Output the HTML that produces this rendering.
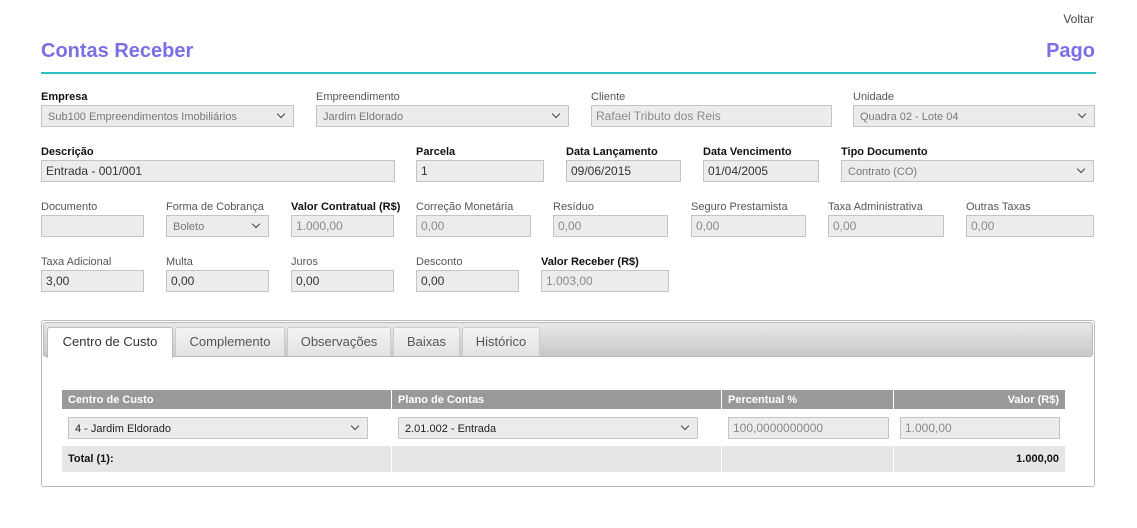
<!DOCTYPE html>
<html><head><meta charset="utf-8"><style>
*{box-sizing:border-box;margin:0;padding:0}
body{width:1137px;height:528px;background:#fff;font-family:"Liberation Sans",Arial,sans-serif;position:relative;overflow:hidden}
.a{position:absolute}
.l{position:absolute;font-size:11px;color:#555;white-space:nowrap;margin-top:1px}
.l.b{font-weight:bold;color:#111}
.i{position:absolute;height:22px;background:#ececec;border:1px solid #c4c4c4;font-size:12px;color:#333;padding:3px 4px;line-height:14px;white-space:nowrap;overflow:hidden}
.i.d{color:#8a8a8a}
.s{font-size:11px;padding:4px 6px;color:#777}
.s:after{content:"";position:absolute;right:9px;top:5px;width:5px;height:5px;border-right:1.6px solid #444;border-bottom:1.6px solid #444;transform:rotate(45deg)}
.tab{position:absolute;top:327px;height:29px;background:linear-gradient(#f4f4f4,#e2e2e2);border:1px solid #ccc;border-bottom:none;border-radius:3px 3px 0 0;font-size:13px;color:#555;text-align:center;line-height:28px}
.th{position:absolute;top:390px;height:19px;background:#999;color:#fff;font-size:11px;font-weight:bold;line-height:20px;padding:0 6px}
.tt{position:absolute;top:446px;height:26px;background:#e6e6e6;font-size:11px;font-weight:bold;line-height:26px;padding:0 6px;color:#111}
</style></head><body>
<div class="a" style="right:43px;top:12px;font-size:12px;color:#444">Voltar</div>
<div class="a" style="left:41px;top:40px;font-size:20px;font-weight:bold;color:#7b6fe6">Contas Receber</div>
<div class="a" style="right:42px;top:40px;font-size:20px;font-weight:bold;color:#7b6fe6">Pago</div>
<div class="a" style="left:41px;top:72px;width:1055px;height:2px;background:#2bc3c0"></div>

<div class="l b" style="left:41px;top:90px">Empresa</div>
<div class="i s" style="left:41px;top:105px;width:253px">Sub100 Empreendimentos Imobiliários</div>
<div class="l" style="left:316px;top:90px">Empreendimento</div>
<div class="i s" style="left:316px;top:105px;width:253px">Jardim Eldorado</div>
<div class="l" style="left:591px;top:90px">Cliente</div>
<div class="i d" style="left:591px;top:105px;width:241px">Rafael Tributo dos Reis</div>
<div class="l" style="left:853px;top:90px">Unidade</div>
<div class="i s" style="left:853px;top:105px;width:242px">Quadra 02 - Lote 04</div>

<div class="l b" style="left:41px;top:145px">Descrição</div>
<div class="i" style="left:41px;top:160px;width:354px">Entrada - 001/001</div>
<div class="l b" style="left:416px;top:145px">Parcela</div>
<div class="i" style="left:416px;top:160px;width:128px">1</div>
<div class="l b" style="left:566px;top:145px">Data Lançamento</div>
<div class="i" style="left:566px;top:160px;width:115px">09/06/2015</div>
<div class="l b" style="left:703px;top:145px">Data Vencimento</div>
<div class="i" style="left:703px;top:160px;width:116px">01/04/2005</div>
<div class="l b" style="left:841px;top:145px">Tipo Documento</div>
<div class="i s" style="left:841px;top:160px;width:253px">Contrato (CO)</div>

<div class="l" style="left:41px;top:200px">Documento</div>
<div class="i" style="left:41px;top:215px;width:103px"></div>
<div class="l" style="left:166px;top:200px">Forma de Cobrança</div>
<div class="i s" style="left:166px;top:215px;width:103px">Boleto</div>
<div class="l b" style="left:291px;top:200px">Valor Contratual (R$)</div>
<div class="i d" style="left:291px;top:215px;width:103px">1.000,00</div>
<div class="l" style="left:416px;top:200px">Correção Monetária</div>
<div class="i d" style="left:416px;top:215px;width:115px">0,00</div>
<div class="l" style="left:553px;top:200px">Resíduo</div>
<div class="i d" style="left:553px;top:215px;width:115px">0,00</div>
<div class="l" style="left:691px;top:200px">Seguro Prestamista</div>
<div class="i d" style="left:691px;top:215px;width:115px">0,00</div>
<div class="l" style="left:828px;top:200px">Taxa Administrativa</div>
<div class="i d" style="left:828px;top:215px;width:116px">0,00</div>
<div class="l" style="left:966px;top:200px">Outras Taxas</div>
<div class="i d" style="left:966px;top:215px;width:128px">0,00</div>

<div class="l" style="left:41px;top:255px">Taxa Adicional</div>
<div class="i" style="left:41px;top:270px;width:103px">3,00</div>
<div class="l" style="left:166px;top:255px">Multa</div>
<div class="i" style="left:166px;top:270px;width:103px">0,00</div>
<div class="l" style="left:291px;top:255px">Juros</div>
<div class="i" style="left:291px;top:270px;width:103px">0,00</div>
<div class="l" style="left:416px;top:255px">Desconto</div>
<div class="i" style="left:416px;top:270px;width:103px">0,00</div>
<div class="l b" style="left:541px;top:255px">Valor Receber (R$)</div>
<div class="i d" style="left:541px;top:270px;width:128px">1.003,00</div>

<div class="a" style="left:41px;top:320px;width:1054px;height:167px;border:1px solid #bbb;border-radius:3px"></div>
<div class="a" style="left:43px;top:322px;width:1050px;height:35px;background:linear-gradient(#e8e8e8,#c8c8c8);border:1px solid #bbb;border-radius:3px"></div>
<div class="tab" style="left:47px;width:126px;height:31px;background:#fff;color:#333;border-color:#bbb">Centro de Custo</div>
<div class="tab" style="left:175px;width:110px">Complemento</div>
<div class="tab" style="left:287px;width:104px">Observações</div>
<div class="tab" style="left:393px;width:67px">Baixas</div>
<div class="tab" style="left:462px;width:78px">Histórico</div>

<div class="th" style="left:62px;width:329px">Centro de Custo</div>
<div class="th" style="left:392px;width:329px">Plano de Contas</div>
<div class="th" style="left:722px;width:171px">Percentual %</div>
<div class="th" style="left:894px;width:171px;text-align:right">Valor (R$)</div>
<div class="i s" style="left:68px;top:417px;width:300px;color:#222">4 - Jardim Eldorado</div>
<div class="i s" style="left:398px;top:417px;width:300px;color:#222">2.01.002 - Entrada</div>
<div class="i d" style="left:728px;top:417px;width:161px">100,0000000000</div>
<div class="i d" style="left:900px;top:417px;width:160px">1.000,00</div>
<div class="tt" style="left:62px;width:329px">Total (1):</div>
<div class="tt" style="left:392px;width:329px"></div>
<div class="tt" style="left:722px;width:171px"></div>
<div class="tt" style="left:894px;width:171px;text-align:right">1.000,00</div>
</body></html>
